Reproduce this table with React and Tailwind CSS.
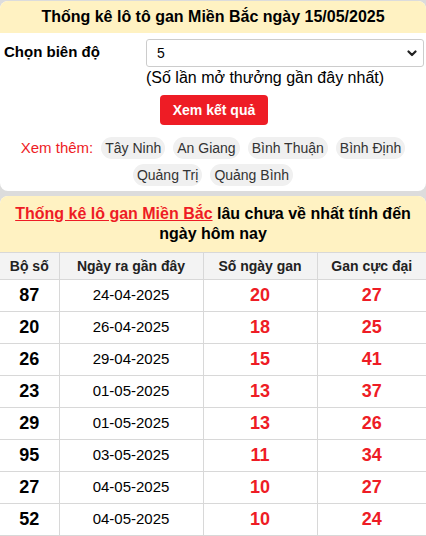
import React from "react";

const rows = [
  ["87", "24-04-2025", "20", "27"],
  ["20", "26-04-2025", "18", "25"],
  ["26", "29-04-2025", "15", "41"],
  ["23", "01-05-2025", "13", "37"],
  ["29", "01-05-2025", "13", "26"],
  ["95", "03-05-2025", "11", "34"],
  ["27", "04-05-2025", "10", "27"],
  ["52", "04-05-2025", "10", "24"],
];

const pills1 = ["Tây Ninh", "An Giang", "Bình Thuận", "Bình Định"];
const pills2 = ["Quảng Trị", "Quảng Bình"];

function Pill({ children }) {
  return (
    <span className="h-[22px] px-[4px] rounded-full bg-[#f0f0f0] text-[#333] text-[14px] leading-[22px] whitespace-nowrap">
      {children}
    </span>
  );
}

export default function App() {
  return (
    <div
      className="min-h-screen bg-[#dcdcdc] pt-px"
      style={{ fontFamily: '"Liberation Sans", Arial, sans-serif' }}
    >
      <div className="bg-white rounded-lg overflow-hidden pb-[5px]">
        <div className="h-[32px] bg-[#fff2c2] flex items-center justify-center text-[16px] font-bold text-black">
          Thống kê lô tô gan Miền Bắc ngày 15/05/2025
        </div>
        <div className="flex pt-[6px]">
          <div className="w-[146px] pl-[4px] pt-[3px] text-[15px] font-bold text-black leading-[20px]">
            Chọn biên độ
          </div>
          <div className="flex-1 pr-[2px]">
            <div className="h-[28px] border border-[#ccc] rounded-[3px] flex items-center justify-between pl-[10px] pr-[6px] text-[14px] text-black">
              <span>5</span>
              <svg width="10" height="7" viewBox="0 0 10 7" fill="none">
                <path d="M1.5 1.5 L5 5 L8.5 1.5" stroke="#222" strokeWidth="2.2" strokeLinecap="round" strokeLinejoin="round" />
              </svg>
            </div>
            <div className="text-[16px] leading-[20px] text-black mt-[1px]">
              (Số lần mở thưởng gần đây nhất)
            </div>
          </div>
        </div>
        <div className="flex justify-center mt-[7px]">
          <button className="w-[108px] h-[30px] bg-[#ee1c25] rounded-[4px] text-white font-bold text-[14px] ml-[2px]">
            Xem kết quả
          </button>
        </div>
        <div className="mt-[12px] flex flex-wrap justify-center gap-x-[8px] gap-y-[5px] px-[6px]">
          <span className="h-[22px] leading-[22px] text-[15px] text-[#ee1c25]">Xem thêm:</span>
          {pills1.map((p) => (
            <Pill key={p}>{p}</Pill>
          ))}
          {pills2.map((p) => (
            <Pill key={p}>{p}</Pill>
          ))}
        </div>
      </div>

      <div className="bg-white rounded-t-lg overflow-hidden mt-[5px]">
        <div className="bg-[#fff2c2] px-[10px] py-[8px] text-center text-[16px] leading-[20px] font-bold text-black">
          <a className="text-[#ee1c25] underline">Thống kê lô gan Miền Bắc</a> lâu chưa về nhất tính đến ngày hôm nay
        </div>
        <table className="w-full border-collapse">
          <colgroup>
            <col style={{ width: 59 }} />
            <col style={{ width: 144 }} />
            <col style={{ width: 114 }} />
            <col style={{ width: 109 }} />
          </colgroup>
          <thead>
            <tr className="bg-[#f3f3f3] h-[27px]">
              {["Bộ số", "Ngày ra gần đây", "Số ngày gan", "Gan cực đại"].map((h, i) => (
                <th
                  key={h}
                  className={`text-[14px] font-bold text-[#222] border-t border-b border-[#d8d8d8] ${i > 0 ? "border-l" : ""}`}
                >
                  {h}
                </th>
              ))}
            </tr>
          </thead>
          <tbody>
            {rows.map((r, idx) => (
              <tr key={idx} className="h-[32px]">
                <td className="text-center text-[18px] font-bold text-black border-b border-[#d8d8d8]">{r[0]}</td>
                <td className="text-center text-[15px] text-black border-b border-l border-[#d8d8d8]">{r[1]}</td>
                <td className="text-center text-[18px] font-bold text-[#ee1c25] border-b border-l border-[#d8d8d8]">{r[2]}</td>
                <td className="text-center text-[18px] font-bold text-[#ee1c25] border-b border-l border-[#d8d8d8]">{r[3]}</td>
              </tr>
            ))}
          </tbody>
        </table>
      </div>
    </div>
  );
}
